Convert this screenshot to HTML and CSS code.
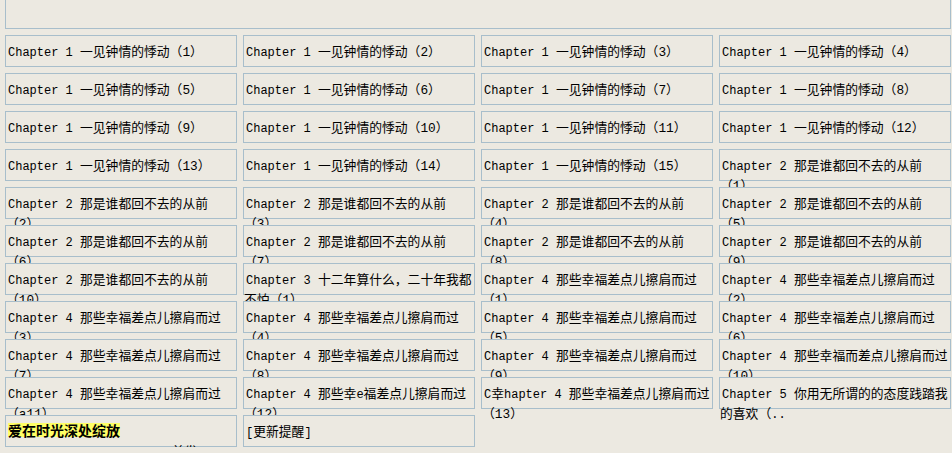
FILE: index.html
```html
<!DOCTYPE html>
<html lang="zh-CN">
<head>
<meta charset="utf-8">
<title>爱在时光深处绽放</title>
<link rel="stylesheet" href="styles.css">
</head>
<body>
<div class="top"></div>
<ul class="list">
<li><a href="#">Chapter 1 <span class="z">一见钟情的悸动（1）</span></a></li>
<li><a href="#">Chapter 1 <span class="z">一见钟情的悸动（2）</span></a></li>
<li><a href="#">Chapter 1 <span class="z">一见钟情的悸动（3）</span></a></li>
<li><a href="#">Chapter 1 <span class="z">一见钟情的悸动（4）</span></a></li>
<li><a href="#">Chapter 1 <span class="z">一见钟情的悸动（5）</span></a></li>
<li><a href="#">Chapter 1 <span class="z">一见钟情的悸动（6）</span></a></li>
<li><a href="#">Chapter 1 <span class="z">一见钟情的悸动（7）</span></a></li>
<li><a href="#">Chapter 1 <span class="z">一见钟情的悸动（8）</span></a></li>
<li><a href="#">Chapter 1 <span class="z">一见钟情的悸动（9）</span></a></li>
<li><a href="#">Chapter 1 <span class="z">一见钟情的悸动（10）</span></a></li>
<li><a href="#">Chapter 1 <span class="z">一见钟情的悸动（11）</span></a></li>
<li><a href="#">Chapter 1 <span class="z">一见钟情的悸动（12）</span></a></li>
<li><a href="#">Chapter 1 <span class="z">一见钟情的悸动（13）</span></a></li>
<li><a href="#">Chapter 1 <span class="z">一见钟情的悸动（14）</span></a></li>
<li><a href="#">Chapter 1 <span class="z">一见钟情的悸动（15）</span></a></li>
<li><a href="#">Chapter 2 <span class="z">那是谁都回不去的从前（1）</span></a></li>
<li><a href="#">Chapter 2 <span class="z">那是谁都回不去的从前（2）</span></a></li>
<li><a href="#">Chapter 2 <span class="z">那是谁都回不去的从前（3）</span></a></li>
<li><a href="#">Chapter 2 <span class="z">那是谁都回不去的从前（4）</span></a></li>
<li><a href="#">Chapter 2 <span class="z">那是谁都回不去的从前（5）</span></a></li>
<li><a href="#">Chapter 2 <span class="z">那是谁都回不去的从前（6）</span></a></li>
<li><a href="#">Chapter 2 <span class="z">那是谁都回不去的从前（7）</span></a></li>
<li><a href="#">Chapter 2 <span class="z">那是谁都回不去的从前（8）</span></a></li>
<li><a href="#">Chapter 2 <span class="z">那是谁都回不去的从前（9）</span></a></li>
<li><a href="#">Chapter 2 <span class="z">那是谁都回不去的从前（10）</span></a></li>
<li><a href="#">Chapter 3 <span class="z">十二年算什么，二十年我都不怕（1）</span></a></li>
<li><a href="#">Chapter 4 <span class="z">那些幸福差点儿擦肩而过（1）</span></a></li>
<li><a href="#">Chapter 4 <span class="z">那些幸福差点儿擦肩而过（2）</span></a></li>
<li><a href="#">Chapter 4 <span class="z">那些幸福差点儿擦肩而过（3）</span></a></li>
<li><a href="#">Chapter 4 <span class="z">那些幸福差点儿擦肩而过（4）</span></a></li>
<li><a href="#">Chapter 4 <span class="z">那些幸福差点儿擦肩而过（5）</span></a></li>
<li><a href="#">Chapter 4 <span class="z">那些幸福差点儿擦肩而过（6）</span></a></li>
<li><a href="#">Chapter 4 <span class="z">那些幸福差点儿擦肩而过（7）</span></a></li>
<li><a href="#">Chapter 4 <span class="z">那些幸福差点儿擦肩而过（8）</span></a></li>
<li><a href="#">Chapter 4 <span class="z">那些幸福差点儿擦肩而过（9）</span></a></li>
<li><a href="#">Chapter 4 <span class="z">那些幸福而差点儿擦肩而过（10）</span></a></li>
<li><a href="#">Chapter 4 <span class="z">那些幸福差点儿擦肩而过（a11）</span></a></li>
<li><a href="#">Chapter 4 <span class="z">那些幸</span>e<span class="z">福差点儿擦肩而过（12）</span></a></li>
<li><a href="#">C<span class="z">幸</span>hapter 4 <span class="z">那些幸福差点儿擦肩而过（13）</span></a></li>
<li><a href="#">Chapter 5 <span class="z">你用无所谓的的态度践踏我的喜欢（</span>..</a></li>
<li><span class="hl">爱在时光深处绽放</span><br>http://www.xshubaow.com<span class="z">首发</span></li>
<li><a href="#">[<span class="z">更新提醒</span>]</a></li>
</ul>
</body>
</html>
```
FILE: styles.css
```css
* {
  box-sizing: border-box;
}

body {
  margin: 0;
  padding: 0 0 0 5px;
  background: #ece9e1;
  color: #000;
  font-family: "Liberation Mono", "Noto Sans CJK SC", monospace;
  font-size: 12px;
  line-height: 20px;
  text-spacing-trim: space-all;
}

.top {
  width: 946px;
  height: 30px;
  margin-top: -1px;
  border: 1px solid #a8becb;
}

.list {
  list-style: none;
  margin: 6px 0 0;
  padding: 0;
  display: grid;
  grid-template-columns: repeat(4, 232px);
  grid-auto-rows: 32px;
  gap: 6px;
}

.list li {
  border: 1px solid #a8becb;
  background: #ece9e1;
  padding: 7px 0 0;
  text-indent: 2px;
  line-height: 20px;
}

.list a {
  color: #000;
  text-decoration: none;
}

.z {
  font-size: 12.8px;
  line-height: 12px;
}

.hl {
  display: inline-block;
  text-indent: 0;
  font-family: "Noto Sans CJK SC", sans-serif;
  font-weight: bold;
  font-size: 14px;
  line-height: 14px;
  background: #ffff66;
}
```
